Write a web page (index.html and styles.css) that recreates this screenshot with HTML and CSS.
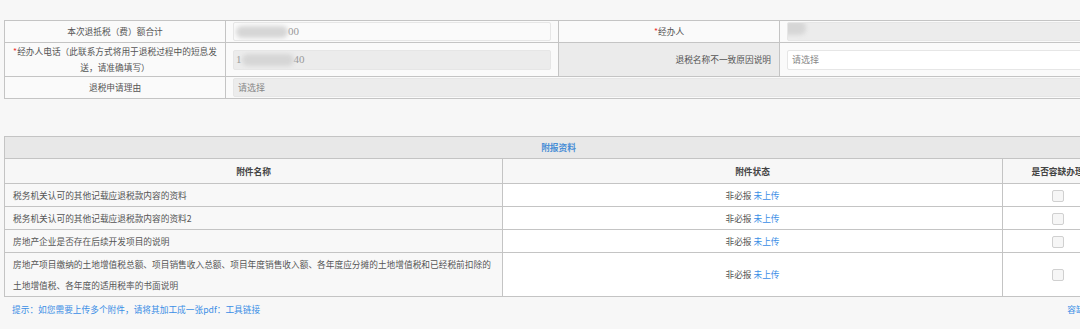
FILE: index.html
```html
<!DOCTYPE html>
<html lang="zh-CN">
<head>
  <meta charset="UTF-8" />
  <title>退税申请</title>
  <link rel="stylesheet" href="styles.css">
</head>
<body>
<div class="pagina">

  <!-- datos del solicitante -->
  <table class="tabla_datos">
    <colgroup>
      <col class="c-label"><col class="c-valor"><col class="c-label"><col class="c-valor">
    </colgroup>
    <tr class="fila-1">
      <td class="etiqueta">本次退抵税（费）额合计</td>
      <td class="valor"><div class="campo"><span class="mancha"></span>00</div></td>
      <td class="etiqueta"><span class="req">*</span>经办人</td>
      <td class="valor"><div class="campo gris"><span class="mancha mancha-sola"></span></div></td>
    </tr>
    <tr class="fila-2">
      <td class="etiqueta"><span class="req">*</span>经办人电话（此联系方式将用于退税过程中的短息发送，请准确填写）</td>
      <td class="valor"><div class="campo gris">1<span class="mancha"></span>40</div></td>
      <td class="etiqueta oscura derecha">退税名称不一致原因说明</td>
      <td class="valor"><div class="campo blanco selector"><span class="vacio">请选择</span><span class="flecha">▾</span></div></td>
    </tr>
    <tr class="fila-3">
      <td class="etiqueta">退税申请理由</td>
      <td class="valor" colspan="3"><div class="campo gris ancho"><span class="vacio">请选择</span></div></td>
    </tr>
  </table>

  <!-- anexos -->
  <table class="tabla_anexos">
    <colgroup>
      <col class="c-nombre"><col class="c-estado"><col class="c-check">
    </colgroup>
    <tr class="titulo">
      <td colspan="3">附报资料</td>
    </tr>
    <tr class="cabecera">
      <td>附件名称</td>
      <td>附件状态</td>
      <td>是否容缺办理</td>
    </tr>
    <tr>
      <td class="nombre">税务机关认可的其他记载应退税款内容的资料</td>
      <td class="estado">非必报 <a href="#">未上传</a></td>
      <td class="check"><span class="caja"></span></td>
    </tr>
    <tr>
      <td class="nombre">税务机关认可的其他记载应退税款内容的资料2</td>
      <td class="estado">非必报 <a href="#">未上传</a></td>
      <td class="check"><span class="caja"></span></td>
    </tr>
    <tr>
      <td class="nombre">房地产企业是否存在后续开发项目的说明</td>
      <td class="estado">非必报 <a href="#">未上传</a></td>
      <td class="check"><span class="caja"></span></td>
    </tr>
    <tr class="doble">
      <td class="nombre">房地产项目缴纳的土地增值税总额、项目销售收入总额、项目年度销售收入额、各年度应分摊的土地增值税和已经税前扣除的<br>土地增值税、各年度的适用税率的书面说明</td>
      <td class="estado">非必报 <a href="#">未上传</a></td>
      <td class="check"><span class="caja"></span></td>
    </tr>
  </table>

  <div class="pie">
    <span>提示：如您需要上传多个附件，请将其加工成一张pdf：<a href="#">工具链接</a></span>
    <a href="#" class="pie-der">容缺说明</a>
  </div>

</div>
</body>
</html>
```

FILE: styles.css
```css
html, body {
  margin: 0;
  padding: 0;
  background: #f7f7f7;
  overflow: hidden;
  font-family: "Noto Sans CJK SC", "Noto Sans", sans-serif;
  font-size: 8.7px;
  color: #555;
}

.pagina {
  width: 1108px;
  padding: 20px 0 0 4px;
}

a {
  color: #3a8ee6;
  text-decoration: none;
}

/* tabla superior */
.tabla_datos {
  width: 1108px;
  border-collapse: collapse;
  table-layout: fixed;
  border: 1px solid #c4c4c4;
}

.tabla_datos .c-label { width: 221px; }
.tabla_datos .c-valor { width: 333px; }

.tabla_datos td {
  border: 1px solid #c4c4c4;
  padding: 0;
}

.fila-1 td { height: 21px; }
.fila-2 td { height: 33px; }
.fila-3 td { height: 21px; }

.etiqueta {
  text-align: center;
  background: #fafafa;
  line-height: 16px;
  padding: 0 4px !important;
}

.etiqueta.oscura { background: #ebebeb; }
.etiqueta.derecha { text-align: right; padding-right: 8px !important; }

.req { color: #e33; }

.valor {
  background: #fafafa;
  padding: 0 7px !important;
}

.campo {
  height: 17px;
  border: 1px solid #e6e6e6;
  border-radius: 2px;
  background: #fafafa;
  font-family: "Liberation Serif", serif;
  font-size: 11px;
  line-height: 17px;
  color: #999;
  padding: 0 2px;
  display: flex;
  align-items: center;
  overflow: hidden;
}

.fila-2 .campo { height: 18px; }

.campo.gris { background: #ececec; }
.campo.blanco { background: #fff; }

.vacio {
  font-family: "Noto Sans CJK SC", sans-serif;
  font-size: 9px;
  color: #888;
  padding-left: 2px;
}

.selector { justify-content: space-between; }

.flecha {
  font-size: 9px;
  color: #555;
  padding-right: 2px;
}

.mancha {
  display: inline-block;
  width: 52px;
  height: 12px;
  background: #d6d6d6;
  border-radius: 6px;
  filter: blur(2px);
}

.mancha-sola {
  width: 26px;
  height: 14px;
  margin: -8px 0 0 -10px;
}

/* tabla de anexos */
.tabla_anexos {
  width: 1108px;
  margin-top: 37px;
  border-collapse: collapse;
  table-layout: fixed;
  border: 1px solid #c4c4c4;
}

.c-nombre { width: 498px; }
.c-estado { width: 500px; }
.c-check { width: 110px; }

.tabla_anexos td {
  border: 1px solid #c4c4c4;
  height: 22px;
  padding: 0;
  background: #fff;
}

.titulo td {
  text-align: center;
  background: #e8e8e8;
  color: #4a8fd6;
  font-weight: bold;
  height: 21px;
}

.cabecera td {
  text-align: center;
  background: #f7f7f7;
  font-weight: bold;
  color: #444;
  height: 24px;
}

.tabla_anexos td.nombre {
  background: #f8f8f8;
  padding: 0 0 0 8px;
  line-height: 21px;
  white-space: nowrap;
}

.estado { text-align: center; }

.check { text-align: center; }

.caja {
  display: inline-block;
  width: 10px;
  height: 10px;
  border: 1px solid #d0d0d0;
  border-radius: 2px;
  background: #f6f6f6;
  vertical-align: middle;
}

.doble td { height: 43px; }

.pie {
  display: flex;
  justify-content: space-between;
  padding: 6px 8px 0 8px;
  color: #3a8ee6;
}

.pie-der { margin-right: 2px; }
```
